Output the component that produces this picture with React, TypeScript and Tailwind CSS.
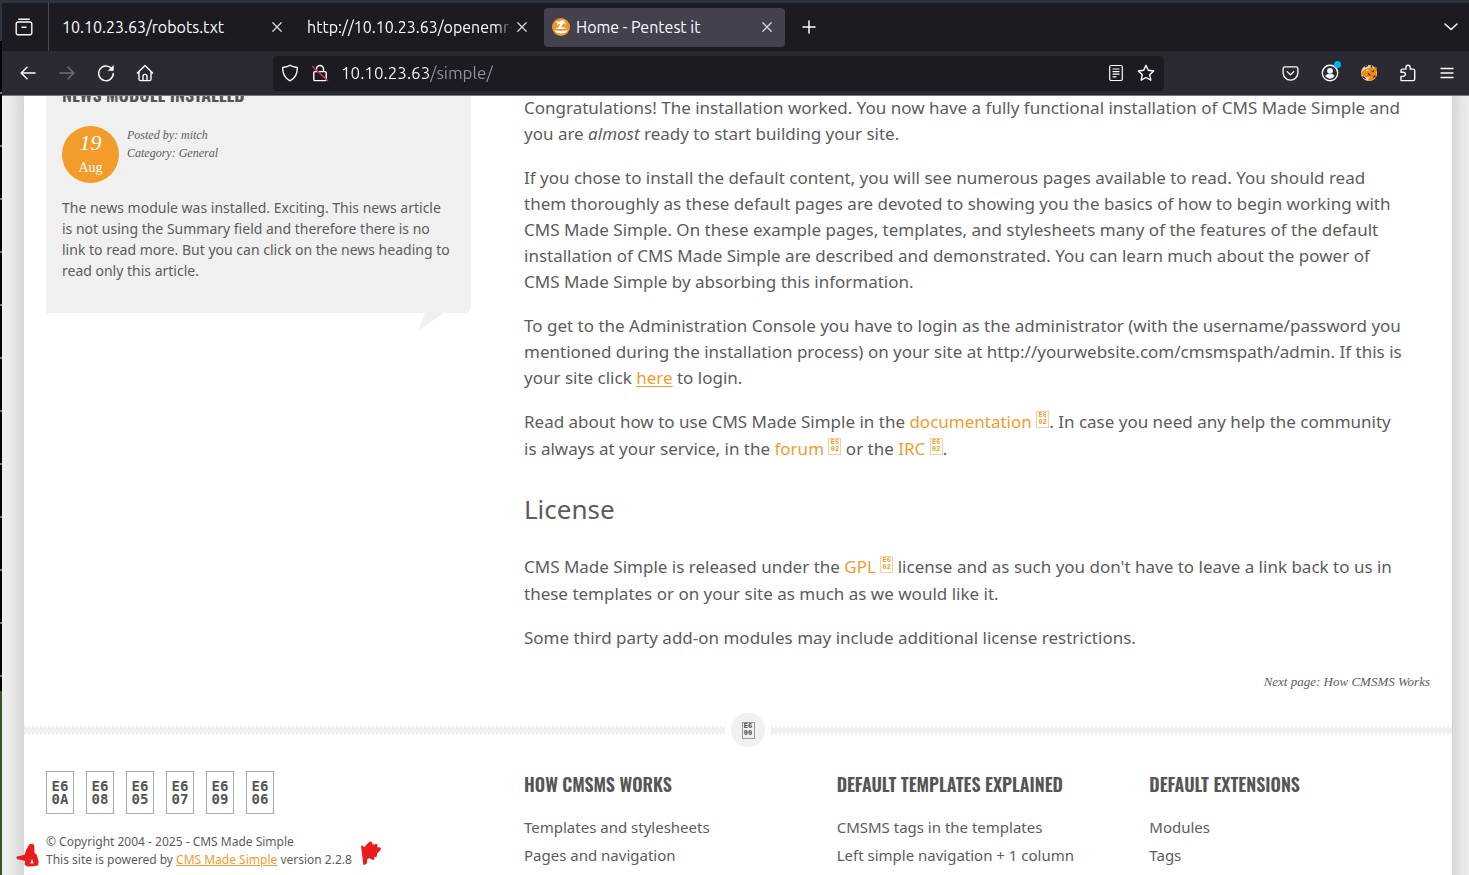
import type { ReactNode } from "react";

const display = "font-['Oswald','Liberation_Sans_Narrow','Roboto_Condensed','Open_Sans_Condensed',sans-serif]";

function ChromeButton({ label, children, dim }: { label: string; children: ReactNode; dim?: boolean }) {
  return (
    <button
      type="button"
      aria-label={label}
      className={
        dim
          ? "relative flex h-8 w-[39px] shrink-0 items-center justify-center text-[#6f6e78]"
          : "relative flex h-8 w-[39px] shrink-0 items-center justify-center text-[#fbfbfe]"
      }
    >
      {children}
    </button>
  );
}

function Icon({ children, size = 18, width = 1.4 }: { children: ReactNode; size?: number; width?: number }) {
  return (
    <svg
      width={size}
      height={size}
      viewBox="0 0 18 18"
      fill="none"
      stroke="currentColor"
      strokeWidth={width}
      strokeLinecap="round"
      strokeLinejoin="round"
      aria-hidden="true"
      className="shrink-0"
    >
      {children}
    </svg>
  );
}

function CloseButton() {
  return (
    <button type="button" aria-label="Close tab" className="flex w-5 shrink-0 justify-center text-[#d6d6dc]">
      <Icon width={1.3}>
        <path d="M4.8 4.8l8.4 8.4M13.2 4.8l-8.4 8.4" />
      </Icon>
    </button>
  );
}

function TabBar() {
  return (
    <div className="flex h-12 shrink-0 items-center bg-[#1c1b22] text-[16px] text-[#fbfbfe]">
      <button
        type="button"
        aria-label="Recent browsing"
        className="mr-[5px] flex h-full w-[47px] shrink-0 items-center justify-center border-r border-[#4b4a54] pr-[2px]"
      >
        <Icon>
          <path d="M3.8 1.200h10.400M3 4h12a1.800 1.800 0 0 1 1.800 1.800v9.200a1.800 1.800 0 0 1-1.800 1.800H3A1.800 1.800 0 0 1 1.200 15V5.800A1.800 1.800 0 0 1 3 4zM7 9.200h4" />
        </Icon>
      </button>
      <div role="tablist" className="flex gap-1">
        <div className="flex h-[39px] w-[241px] items-center pr-2 pl-2">
          <button type="button" role="tab" className="min-w-0 flex-1 overflow-hidden text-left whitespace-nowrap">
            10.10.23.63/robots.txt
          </button>
          <CloseButton />
        </div>
        <div className="flex h-[39px] w-[241px] items-center pr-2 pl-2">
          <button
            type="button"
            role="tab"
            className="min-w-0 flex-1 overflow-hidden [mask-image:linear-gradient(90deg,#000_92%,transparent)] text-left whitespace-nowrap"
          >
            http://10.10.23.63/openemr-
          </button>
          <CloseButton />
        </div>
        <div className="flex h-[39px] w-[241px] items-center rounded bg-[#42414d] pr-2 pl-2">
          <button type="button" role="tab" aria-selected="true" className="flex min-w-0 flex-1 items-center gap-[6px] text-left whitespace-nowrap">
            <svg width="18" height="18" viewBox="0 0 18 18" aria-hidden="true" className="shrink-0">
              <circle cx="9" cy="9" r="9" fill="#f5932b" />
              <path
                d="M3.400 4.600c1.600-1.700 3.200-1.600 4.300-.8C8.900 1.800 11.900 1.700 13.400 3.600c-.8-.1-1.400 0-1.700.3 1.700.4 2.400 1.500 2.200 3.200-1-1.200-1.900-1.600-2.900-1.500-.2 1.400-1.200 2.800-2.400 4H5.900c1.100-1 1.900-2.200 2.200-3.700-1.300 0-2.100.6-2.600 1.600-.5-.8-.3-1.500.2-2.200-.8-.3-1.500-.5-2.300-.7zM4 9.900c2-1 8.600-1 10.200.2.600 1.200-10.500 1.200-10.200-.2zM2.200 12c2.400 1.200 11.200 1.200 13.600 0-1 2.500-3.200 3.500-6.800 3.500S3.200 14.500 2.200 12z"
                fill="#fff"
              />
            </svg>
            Home - Pentest it
          </button>
          <CloseButton />
        </div>
      </div>
      <button type="button" aria-label="New tab" className="ml-[14px] flex w-5 justify-center">
        <Icon width={1.500}>
          <path d="M9 3v12M3 9h12" />
        </Icon>
      </button>
      <button type="button" aria-label="List all tabs" className="mr-2 ml-auto flex w-5 justify-center">
        <Icon width={1.500}>
          <path d="M3 6l6 5.500L15 6" />
        </Icon>
      </button>
    </div>
  );
}

function Toolbar() {
  return (
    <div className="flex h-[45px] shrink-0 items-center border-b border-[#76747f] bg-[#2b2a33] pr-[3px] pl-[6px]">
      <ChromeButton label="Back">
        <Icon width={1.500}>
          <path d="M16 9H2.500M8 3.200L2.200 9 8 14.800" />
        </Icon>
      </ChromeButton>
      <ChromeButton label="Forward" dim>
        <Icon width={1.500}>
          <path d="M2 9h13.500M10 3.200L15.800 9 10 14.800" />
        </Icon>
      </ChromeButton>
      <ChromeButton label="Reload">
        <Icon width={1.500}>
          <path d="M14.500 4.600A7.300 7.300 0 1 0 16.300 9.500" />
          <path d="M16.400 1.800v4.800h-4.800z" fill="currentColor" strokeWidth="0.600" />
        </Icon>
      </ChromeButton>
      <ChromeButton label="Home">
        <Icon>
          <path d="M1.400 9L9 1.600 16.600 9M3 8v7a1.600 1.600 0 0 0 1.600 1.600h8.800A1.600 1.600 0 0 0 15 15V8M7 16.400v-4a2 2 0 0 1 4 0v4" />
        </Icon>
      </ChromeButton>
      <div className="grow-[109] basis-0" />
      <form className="flex h-[35px] grow-[874] basis-0 items-center rounded bg-[#1c1b22] pr-[9px] pl-2 text-[#fbfbfe]">
        <button type="button" aria-label="Tracking protection" className="flex shrink-0">
          <Icon>
            <path d="M9 1.200c2 1.500 4.500 2 7.300 2.300.1 6-2 10.800-7.300 13.300C3.700 14.300 1.600 9.500 1.700 3.500 4.500 3.200 7 2.700 9 1.200z" />
          </Icon>
        </button>
        <button type="button" aria-label="Connection is not secure" className="ml-3 flex shrink-0">
          <Icon>
            <path d="M5.500 7.500V5a3.500 3.500 0 0 1 7 0v2.500M4 7.600h10a1.200 1.200 0 0 1 1.200 1.200v6.600a1.200 1.200 0 0 1-1.200 1.200H4a1.200 1.200 0 0 1-1.200-1.200V8.800A1.200 1.200 0 0 1 4 7.600z" />
            <path d="M1.500 2.500l15 14" stroke="#e22850" strokeWidth="1.600" />
          </Icon>
        </button>
        <input
          type="text"
          aria-label="Address"
          defaultValue="10.10.23.63/simple/"
          className="ml-3 min-w-0 flex-1 [background-image:linear-gradient(90deg,#fbfbfe_88px,#8f8f9d_88px)] bg-clip-text text-[17px] text-transparent outline-none"
        />
        <button type="button" aria-label="Reader view" className="flex shrink-0">
          <Icon>
            <path d="M4.200 1.500h9.600a1.500 1.500 0 0 1 1.500 1.500v12a1.500 1.500 0 0 1-1.500 1.500H4.200A1.500 1.500 0 0 1 2.700 15V3a1.500 1.500 0 0 1 1.500-1.500zM6 5h6M6 7.600h6M6 10.200h6M6 12.800h3" strokeWidth="1.200" />
          </Icon>
        </button>
        <button type="button" aria-label="Bookmark this page" className="ml-3 flex shrink-0">
          <Icon>
            <path d="M9 1.300l2.300 5 5.400.7-4 3.700 1.100 5.500L9 13.500l-4.800 2.700 1.100-5.500-4-3.700 5.400-.7z" />
          </Icon>
        </button>
      </form>
      <div className="grow-[107] basis-0" />
      <ChromeButton label="Save to Pocket">
        <Icon size={17}>
          <path d="M3 2h12a1.800 1.800 0 0 1 1.800 1.800v4.700a7.800 7.500 0 0 1-15.600 0V3.800A1.800 1.800 0 0 1 3 2zM5.500 7L9 10.300 12.500 7" />
        </Icon>
      </ChromeButton>
      <ChromeButton label="Account">
        <Icon>
          <circle cx="9" cy="9" r="7.700" />
          <circle cx="9" cy="6.800" r="2.200" fill="currentColor" />
          <path d="M5 12.200c0-1 .8-1.700 1.800-1.700h4.400c1 0 1.800.7 1.800 1.700-1 1.300-2.400 2-4 2s-3-.7-4-2z" fill="currentColor" strokeWidth="0.800" />
        </Icon>
        <span className="absolute top-[4px] right-[8px] size-[7px] rounded-full bg-[#00b3f4]" />
      </ChromeButton>
      <ChromeButton label="Proxy extension">
        <svg width="18" height="18" viewBox="0 0 18 18" aria-hidden="true">
          <circle cx="9" cy="9" r="8" fill="#d9d4cc" />
          <path d="M2 7.500L5.500 5l3.500-.8L12 1.500l1 3 3.800-1.200L16 9l1 3-4 3.500-4 1.700-1.600-3.400L3.400 12 1 9.500z" fill="#f08a0c" />
          <path d="M5 3l3-1.600M2.600 12.600l3 2.200M12 8l2-1.600M11.500 1.500v2M8 9.500l2.500 2M13.500 13.500l1.800-2" stroke="#3b2c1c" strokeWidth="1.300" />
          <path d="M6 7l2.500-1M6.500 13.800l3 .2" stroke="#ffe1a8" strokeWidth="1.200" />
        </svg>
      </ChromeButton>
      <ChromeButton label="Extensions">
        <Icon>
          <path d="M2 16.600h12.300a1.400 1.400 0 0 0 1.400-1.400V6.500a1.400 1.400 0 0 0-1.400-1.400h-3.100V3.300a2.100 2.100 0 0 0-4.200 0v1.800H3.400A1.400 1.400 0 0 0 2 6.500v1.700h2.200a2.100 2.100 0 0 1 0 4.200H2z" />
        </Icon>
      </ChromeButton>
      <ChromeButton label="Open application menu">
        <Icon width={1.300}>
          <path d="M3 4.500h12M3 9h12M3 13.500h12" />
        </Icon>
      </ChromeButton>
    </div>
  );
}

function TinyCode({ low, dark }: { low: string; dark?: boolean }) {
  return (
    <span
      className={
        dark
          ? "inline-block h-[17px] w-[13px] overflow-hidden border border-[#999] text-center font-['Liberation_Mono',monospace] text-[7px] leading-[7px] font-bold text-[#444]"
          : "inline-block h-[17px] w-[13px] overflow-hidden border border-[#fad09a] text-center font-['Liberation_Mono',monospace] text-[7px] leading-[7px] font-bold text-[#f39c2c]"
      }
    >
      <span className="block">E6</span>
      <span className="block">{low}</span>
    </span>
  );
}

function ExternalLink({ children }: { children: ReactNode }) {
  return (
    <a href="#" className="whitespace-nowrap text-[#f39c2c]">
      {children} <TinyCode low="02" />
    </a>
  );
}

function NewsCard() {
  return (
    <article className="relative rounded-br-md bg-[#f0f0f0] px-4 pb-8">
      <h2 className={`${display} text-[18px] leading-[26px] font-semibold text-[#555] uppercase`}>
        <a href="#">News Module Installed</a>
      </h2>
      <div className="mt-[19px] flex gap-2">
        <time className="flex size-[57px] shrink-0 flex-col items-center rounded-full bg-[#f39c2c] pt-1 font-['Liberation_Serif',serif] text-white">
          <span className="text-[22px] leading-[26px] italic">19</span>
          <span className="text-[14px] leading-[24px]">Aug</span>
        </time>
        <div className="font-['Liberation_Serif',serif] text-[12px] leading-[18px] italic">
          <p>Posted by: mitch</p>
          <p>Category: General</p>
        </div>
      </div>
      <p className="mt-[14px] text-[14px] leading-[21px]">
        The news module was installed. Exciting. This news article
        <br />
        is not using the Summary field and therefore there is no
        <br />
        link to read more. But you can click on the news heading to
        <br />
        read only this article.
      </p>
      <svg width="26" height="17" viewBox="0 0 26 17" aria-hidden="true" className="absolute top-full right-[26px]">
        <path d="M6 0h19L0 17z" fill="#f0f0f0" />
      </svg>
    </article>
  );
}

function MainContent() {
  return (
    <main className="text-[17px] leading-[26px]">
      <p>
        Congratulations! The installation worked. You now have a fully functional installation of CMS Made Simple and
        <br />
        you are <em>almost</em> ready to start building your site.
      </p>
      <p className="mt-[18px]">
        If you chose to install the default content, you will see numerous pages available to read. You should read
        <br />
        them thoroughly as these default pages are devoted to showing you the basics of how to begin working with
        <br />
        CMS Made Simple. On these example pages, templates, and stylesheets many of the features of the default
        <br />
        installation of CMS Made Simple are described and demonstrated. You can learn much about the power of
        <br />
        CMS Made Simple by absorbing this information.
      </p>
      <p className="mt-[18px]">
        To get to the Administration Console you have to login as the administrator (with the username/password you
        <br />
        mentioned during the installation process) on your site at http://yourwebsite.com/cmsmspath/admin. If this is
        <br />
        your site click{" "}
        <a href="#" className="text-[#f39c2c] underline underline-offset-2">
          here
        </a>{" "}
        to login.
      </p>
      <p className="mt-[17px] leading-[27px]">
        Read about how to use CMS Made Simple in the <ExternalLink>documentation</ExternalLink>. In case you need any
        help the community
        <br />
        is always at your service, in the <ExternalLink>forum</ExternalLink> or the <ExternalLink>IRC</ExternalLink>.
      </p>
      <h3 className="mt-[29px] text-[26px] leading-[36px]">License</h3>
      <p className="mt-[26px] leading-[27px]">
        CMS Made Simple is released under the <ExternalLink>GPL</ExternalLink> license and as such you don't have to
        leave a link back to us in
        <br />
        these templates or on your site as much as we would like it.
      </p>
      <p className="mt-[18px]">Some third party add-on modules may include additional license restrictions.</p>
      <p className="mt-[21px] text-right font-['Liberation_Serif',serif] text-[13px] leading-[20px] italic">
        Next page: <a href="#">How CMSMS Works</a>
      </p>
    </main>
  );
}

function DottedRule() {
  return (
    <div className="h-[9px]">
      <div className="h-[2px] bg-[repeating-linear-gradient(90deg,#f0f0f0_0_2px,#fff_2px_4px)]" />
      <div className="h-[5px] bg-[#f0f0f0]" />
      <div className="h-[2px] bg-[repeating-linear-gradient(90deg,#f0f0f0_0_2px,#fff_2px_4px)]" />
    </div>
  );
}

const socials = ["0A", "08", "05", "07", "09", "06"];

const columns = [
  { title: "How CMSMS Works", links: ["Templates and stylesheets", "Pages and navigation"] },
  { title: "Default Templates Explained", links: ["CMSMS tags in the templates", "Left simple navigation + 1 column"] },
  { title: "Default Extensions", links: ["Modules", "Tags"] },
];

function Footer() {
  return (
    <footer className="grid grid-cols-[425fr_906fr] gap-x-[53px] px-[22px] pt-6 pb-10">
      <div>
        <ul className="flex gap-3">
          {socials.map((code) => (
            <li key={code}>
              <a
                href="#"
                className="flex h-[43px] w-7 flex-col items-center justify-center border border-[#aaa] font-['DejaVu_Sans_Mono',monospace] text-[14px] leading-[13px] font-bold text-[#555]"
              >
                <span>E6</span>
                <span>{code}</span>
              </a>
            </li>
          ))}
        </ul>
        <div className="relative mt-[19px] text-[12px] leading-[18px]">
          <p>© Copyright 2004 - 2025 - CMS Made Simple</p>
          <p className="w-max">
            This site is powered by{" "}
            <a href="#" className="text-[#f39c2c] underline">
              CMS Made Simple
            </a>{" "}
            version 2.2.8
          </p>
          <svg width="24" height="26" viewBox="0 0 24 26" aria-hidden="true" className="absolute top-[10px] -left-[30px]">
            <path
              d="M14 2l2-.6 1.400 1.500.4 7.500 2.200 1.800 1.800 6-.2 3.600-4.600.6-6 .2-1.600-1.600.6-3.500-4.500-1.300-4-.8-.2-1.200 4-.8 4-1.400 1.500-4.500z"
              fill="#ea1c1c"
              stroke="#ea1c1c"
              strokeWidth="1.600"
              strokeLinejoin="round"
            />
            <path d="M16 16l1.600 4.200-3.200.3z" fill="#fff" />
          </svg>
          <svg width="22" height="24" viewBox="0 0 22 24" aria-hidden="true" className="absolute top-[8px] left-[314px]">
            <path
              d="M2 5.500l3 2 1.500-2.500L9.500 2l1.500-.6 1 3.200 4.500-.8-.2 3 3.700.7-.5 1.500-3 2.600-.6 3.600-1.800-.6-1 3.600-3.600-2-3 1.200-.4 4.400-2 1.200z"
              fill="#ea1c1c"
              stroke="#ea1c1c"
              strokeWidth="1.800"
              strokeLinejoin="round"
            />
          </svg>
        </div>
      </div>
      <nav aria-label="Footer" className="grid grid-cols-3 gap-x-8">
        {columns.map((col) => (
          <div key={col.title}>
            <h4 className={`${display} text-[18px] leading-[26px] font-semibold whitespace-nowrap text-[#555] uppercase`}>
              <a href="#">{col.title}</a>
            </h4>
            <ul className="mt-4 text-[15px] leading-[28px] whitespace-nowrap">
              {col.links.map((link) => (
                <li key={link}>
                  <a href="#">{link}</a>
                </li>
              ))}
            </ul>
          </div>
        ))}
      </nav>
    </footer>
  );
}

export default function App() {
  return (
    <div className="flex h-screen overflow-hidden bg-black font-['Noto_Sans','Open_Sans',sans-serif]">
      <div className="flex w-[2px] shrink-0 flex-col">
        <div className="h-[41px] bg-[#2b3440]" />
        <div className="flex-1 bg-[linear-gradient(180deg,transparent_0_96%,#777_96%)] bg-[length:2px_53px]" />
        <div className="h-[184px] bg-[#3a5428]" />
      </div>
      <div className="flex min-w-0 flex-1 flex-col border-t-[3px] border-[#2b3440]">
        <div className="shrink-0 font-['Ubuntu','Open_Sans',sans-serif]">
          <TabBar />
          <Toolbar />
        </div>
        <div className="min-h-0 flex-1 overflow-hidden bg-[#f0f0f0] pr-[17px] pl-[22px]">
          <div className="min-h-full bg-white text-[#5c5c5c] shadow-[0_0_22px_#bbb]">
            <div className="-mt-[15px] grid grid-cols-[425fr_906fr] items-start gap-x-[53px] px-[22px]">
              <NewsCard />
              <div className="min-w-0 pt-[14px]">
                <MainContent />
              </div>
            </div>
            <div className="mt-[21px] grid grid-cols-[701fr_34px_681fr] items-center gap-[6px]">
              <DottedRule />
              <a href="#" aria-label="Back to top" className="flex size-[34px] items-center justify-center rounded-full bg-[#f0f0f0]">
                <TinyCode low="00" dark />
              </a>
              <DottedRule />
            </div>
            <Footer />
          </div>
        </div>
      </div>
    </div>
  );
}
